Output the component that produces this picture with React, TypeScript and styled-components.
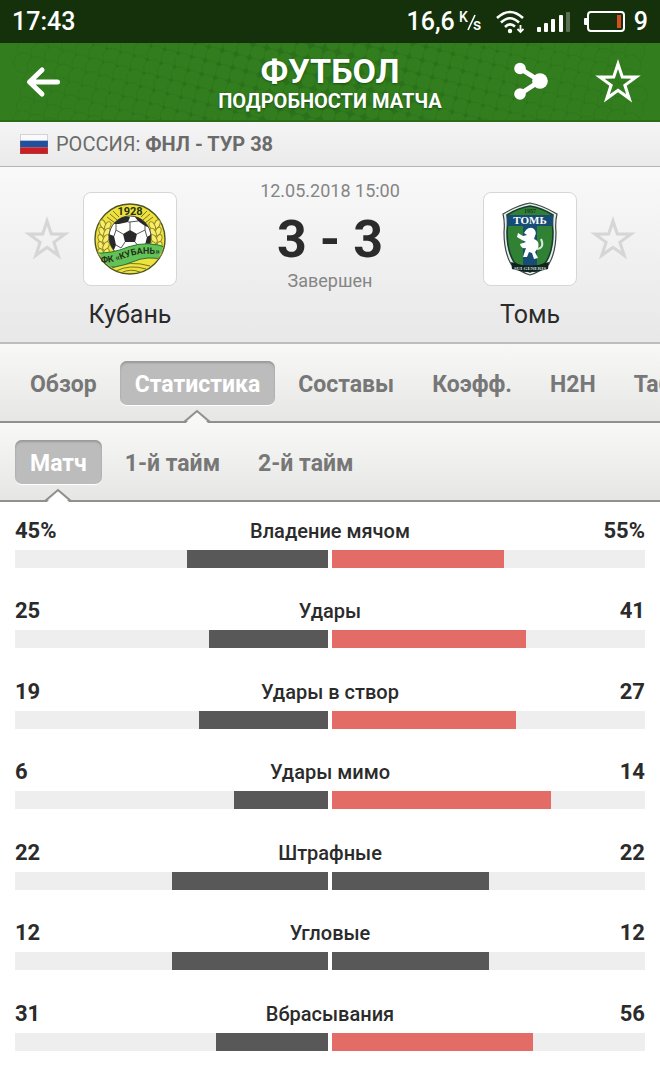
import React from 'react';
import styled, { createGlobalStyle } from 'styled-components';

const Global = createGlobalStyle`
  * { box-sizing: border-box; }
  html { overflow-x: hidden; }
  body {
    margin: 0;
    background: #fff;
    font-family: Roboto, "Liberation Sans", sans-serif;
    color: #2b2b2b;
  }
  button { font: inherit; border: 0; padding: 0; margin: 0; background: none; cursor: pointer; }
  h1, h2, p { margin: 0; font-weight: inherit; }
`;

const Screen = styled.div`
  min-height: 100vh;
  display: flex;
  flex-direction: column;
  overflow: hidden;
`;

const StatusBar = styled.div`
  height: 43px;
  padding: 0 12px;
  display: flex;
  align-items: center;
  justify-content: space-between;
  background: #14310b;
  color: #fff;
  font-size: 25px;
  line-height: 40px;
  font-weight: 500;
`;

const StatusGroup = styled.div<{ $gap: number }>`
  display: flex;
  align-items: center;
  gap: ${(p) => p.$gap}px;
`;

const Header = styled.header`
  position: relative;
  height: 79px;
  padding: 0 20px;
  display: grid;
  grid-template-columns: 126px 1fr 126px;
  align-items: center;
  background: #327d1e;
  color: #fff;
  border-bottom: 2px solid #2a6a19;
`;

const Halftone = styled.svg`
  position: absolute;
  inset: 0;
  width: 100%;
  height: 100%;
`;

const HeaderTitle = styled.div`
  position: relative;
  padding-top: 2px;
  text-align: center;
  white-space: nowrap;
  font-weight: 700;
  text-shadow: 0 1px 2px rgba(0, 40, 0, 0.5);
`;

const Title = styled.h1`
  font-size: 34px;
  line-height: 36px;
  font-weight: 700;
`;

const Subtitle = styled.p`
  font-size: 20px;
  line-height: 24px;
`;

const HeaderActions = styled.div<{ $end?: boolean }>`
  position: relative;
  display: flex;
  align-items: center;
  justify-content: ${(p) => (p.$end ? 'space-between' : 'flex-start')};
`;

const IconButton = styled.button`
  display: flex;
  color: inherit;
`;

const LeagueBar = styled.div`
  height: 45px;
  padding: 0 20px;
  display: flex;
  align-items: center;
  gap: 8px;
  background: linear-gradient(#f5f5f5, #eaeaea);
  border-bottom: 1px solid #b4b4b4;
  color: #6b6b6b;
  font-size: 20px;
  line-height: 42px;
`;

const Match = styled.section`
  height: 177px;
  padding: 0 25px;
  display: grid;
  grid-template-columns: 44px 122px 1fr 122px 44px;
  background: linear-gradient(#f9f9f9, #e8e8e8);
  border-bottom: 2px solid #bdbdbd;
`;

const Favourite = styled.button`
  height: 144px;
  display: flex;
  align-items: center;
  justify-content: center;
  color: #d6d6d6;
`;

const Team = styled.div`
  padding-top: 25px;
  display: flex;
  flex-direction: column;
  align-items: center;
  gap: 12px;
`;

const TeamName = styled.h2`
  font-size: 25px;
  line-height: 34px;
`;

const Crest = styled.div`
  width: 94px;
  height: 94px;
  display: flex;
  align-items: center;
  justify-content: center;
  background: #fff;
  border: 1px solid #d6d6d6;
  border-radius: 8px;
`;

const Result = styled.div`
  padding-top: 12px;
  text-align: center;
  color: #858585;
  font-size: 18px;
  line-height: 24px;
`;

const Score = styled.p`
  padding-top: 8px;
  color: #2b2b2b;
  font-size: 52px;
  line-height: 58px;
  font-weight: 700;
`;

const TabBar = styled.nav`
  height: 79px;
  padding: 0 15px;
  display: flex;
  align-items: center;
  gap: 8px;
  background: linear-gradient(#f8f8f7, #e6e6e5);
  border-bottom: 2px solid #90908e;
`;

const Tab = styled.button<{ $active?: boolean }>`
  position: relative;
  flex: none;
  height: 44px;
  padding: 4px 15px 0;
  border-radius: 7px;
  font-size: 23px;
  line-height: 40px;
  font-weight: 700;
  white-space: nowrap;
  color: ${(p) => (p.$active ? '#fff' : '#777')};
  background: ${(p) => (p.$active ? '#bcbcbc' : 'none')};
  box-shadow: ${(p) => (p.$active ? 'inset 0 2px 2px #999, 0 1px 0 #fff' : 'none')};
`;

const Pointer = styled.svg`
  position: absolute;
  left: 50%;
  top: 48px;
  margin-left: -14px;
  overflow: visible;
`;

const Stats = styled.ul`
  flex: 1;
  margin: 0;
  padding: 15px 15px 0;
  list-style: none;
  display: grid;
  grid-auto-rows: 1fr;
`;

const Stat = styled.li`
  min-height: 64px;
`;

const StatHead = styled.div`
  display: grid;
  grid-template-columns: 80px 1fr 80px;
  font-size: 20px;
  line-height: 28px;
  text-align: center;
  font-weight: 500;
  margin-bottom: 5px;
`;

const Value = styled.strong<{ $right?: boolean }>`
  text-align: ${(p) => (p.$right ? 'right' : 'left')};
  font-size: 22px;
  font-weight: 700;
`;

const Bars = styled.div`
  display: grid;
  grid-template-columns: 1fr 1fr;
  gap: 4px;
`;

const Track = styled.div<{ $from: 'start' | 'end' }>`
  height: 18px;
  display: flex;
  justify-content: flex-${(p) => p.$from};
  background: #eee;
`;

const Fill = styled.div<{ $lead?: boolean }>`
  background: ${(p) => (p.$lead ? '#e46c67' : '#585858')};
`;

const StarIcon = styled.svg`
  overflow: visible;
`;

function starPath(outer: number, inner: number) {
  const points = Array.from({ length: 10 }, (_, i) => {
    const r = i % 2 ? inner : outer;
    const a = (i * Math.PI) / 5;
    return `${(22 + r * Math.sin(a)).toFixed(1)} ${(23 - r * Math.cos(a)).toFixed(1)}`;
  });
  return `M${points.join('L')}Z`;
}

function Star() {
  return (
    <StarIcon width="44" height="44" viewBox="0 0 44 44" fill="currentColor" fillRule="evenodd">
      <path d={starPath(24, 9.2) + starPath(14, 5.4)} />
    </StarIcon>
  );
}

function Dots() {
  const dots: React.ReactElement[] = [];
  const a = 0.26;
  const step = 14;
  for (let i = -30; i < 54; i++) {
    for (let j = -20; j < 24; j++) {
      const x = (i * Math.cos(a) - j * Math.sin(a)) * step;
      const y = (i * Math.sin(a) + j * Math.cos(a)) * step;
      const d = Math.abs(x - 330);
      if (d > 310 || y < -12 || y > 92) continue;
      dots.push(<circle key={`${i}/${j}`} cx={x.toFixed(1)} cy={y.toFixed(1)} r={(7 + d / 105).toFixed(1)} />);
    }
  }
  return (
    <Halftone viewBox="0 0 660 79" preserveAspectRatio="xMidYMid slice" aria-hidden="true">
      <rect x="50" width="560" height="79" fill="#2b701b" />
      <g fill="#327d1e" stroke="#2e761c" strokeWidth="0.6">{dots}</g>
    </Halftone>
  );
}

function KubanCrest() {
  return (
    <svg width="72" height="74" viewBox="0 0 72 74" role="img" aria-label="Кубань">
      <defs>
        <clipPath id="ball"><circle cx="36" cy="35" r="21" /></clipPath>
        <clipPath id="disc"><circle cx="36" cy="37" r="34" /></clipPath>
        <path id="ribbonLine" d="M7 61 Q20 61 34 55 Q50 49 72 54" />
      </defs>
      <circle cx="36" cy="37" r="35" fill="#efe23c" stroke="#4c5526" strokeWidth="1.4" />
      <g fill="none" stroke="#76752a" strokeWidth="1">
        <path d="M13 15 L21 21 M16 12 L23 18 M19 9 L25 15 M59 15 L51 21 M56 12 L49 18 M53 9 L47 15" />
        <path d="M18 66 Q36 58 56 64 M22 69 Q36 62 52 67 M27 71 Q36 66 46 70" />
      </g>
      <g fill="#f8ec68" stroke="#8d8528" strokeWidth="0.9">
        {[0, 1, 2, 3, 4].map((n) => (
          <g key={n}>
            <ellipse cx={7 + (n < 2 ? 2 - n : 0)} cy={23 + n * 7} rx="2.6" ry="4.6" transform={`rotate(-22 7 ${23 + n * 7})`} />
            <ellipse cx={12 + (n < 2 ? 2 - n : 0)} cy={23 + n * 7} rx="2.6" ry="4.6" transform={`rotate(28 12 ${23 + n * 7})`} />
            <ellipse cx={65 - (n < 2 ? 2 - n : 0)} cy={23 + n * 7} rx="2.6" ry="4.6" transform={`rotate(22 65 ${23 + n * 7})`} />
            <ellipse cx={60 - (n < 2 ? 2 - n : 0)} cy={23 + n * 7} rx="2.6" ry="4.6" transform={`rotate(-28 60 ${23 + n * 7})`} />
          </g>
        ))}
      </g>
      <circle cx="36" cy="35" r="21" fill="#fff" stroke="#444" strokeWidth="1" />
      <g clipPath="url(#ball)">
        <path fill="#292929" d="M36 28 L43 32 L41 40 L31 40 L29 32 Z M24 13 L36 15 L34 20 L25 22 L20 22 Z M48 13 L57 26 L51 24 L44 19 L41 15 Z M14 32 L20 34 L22 43 L19 50 L13 45 Z M58 32 L53 35 L51 43 L55 49 L60 45 Z" />
        <path fill="none" stroke="#555" strokeWidth="1" d="M36 28 V20 L44 19 M34 20 L36 20 M43 32 L51 28 V24 M41 40 L46 46 L51 43 M31 40 L27 46 L22 43 M29 32 L22 28 V22 M22 28 L20 34 M51 28 L53 35" />
      </g>
      <g clipPath="url(#disc)">
        <path d="M-1 51 Q18 52 34 45 Q54 38 74 46 L70 58 Q54 53 38 60 Q22 67 4 65 Z" fill="#62c158" stroke="#2c7331" strokeWidth="1" />
      </g>
      <g fontFamily="Roboto, sans-serif" fontWeight="700" fill="#243218">
        <text x="36" y="13" textAnchor="middle" fontSize="11">1928</text>
        <text fontSize="9"><textPath href="#ribbonLine">ФК «КУБАНЬ»</textPath></text>
      </g>
    </svg>
  );
}

function TomCrest() {
  return (
    <svg width="56" height="74" viewBox="0 0 56 74" role="img" aria-label="Томь">
      <path d="M28 1 Q40 3 55 12 Q53 20 54 30 Q54 50 47 62 Q38 70 28 73 Q18 70 9 62 Q2 50 2 30 Q3 20 1 12 Q16 3 28 1 Z" fill="#e7eeeb" stroke="#39463f" strokeWidth="1.2" />
      <path d="M28 4 Q40 6 51 13 Q50 20 51 30 Q51 49 44 60 Q36 67 28 70 Q20 67 12 60 Q5 49 5 30 Q6 20 5 13 Q16 6 28 4 Z" fill="#318135" stroke="#173c2e" strokeWidth="1.6" />
      <path d="M5 13 H51 V24 H35 V70 H21 V24 H5 Z" fill="#174d75" />
      <path d="M24 28 Q28 24 32 27 Q35 30 33 34 L32 37 Q38 39 36 46 L33 50 L36 56 L32 57 L30 51 L27 50 L25 55 L21 55 L24 46 Q19 47 18 42 L24 40 L20 38 L15 35 L16 31 L21 34 L25 33 L22 31 Z" fill="#fff" />
      <path d="M35 47 Q43 46 39 37" stroke="#d9e9df" strokeWidth="2" fill="none" />
      <path d="M9 60 Q28 67 47 60 L46 67 Q28 73 10 67 Z" fill="#11231e" />
      <g textAnchor="middle" fontFamily="Liberation Serif, serif" fontWeight="700">
        <text x="28" y="11" fontSize="6" fill="#12351f">1957</text>
        <text x="28" y="22" fontSize="11" fill="#fff">ТОМЬ</text>
        <text x="28" y="68" fontSize="5" fill="#d5ddd8">SUI GENERIS</text>
      </g>
    </svg>
  );
}

function TabPointer({ fill }: { fill: string }) {
  return (
    <Pointer width="28" height="16" viewBox="0 0 28 16" aria-hidden="true">
      <path d="M1 16 L14 3 L27 16 Z" fill={fill} />
      <path d="M1 13 L14 2 L27 13" fill="none" stroke="#90908e" strokeWidth="2" />
    </Pointer>
  );
}

const TABS = ['Обзор', 'Статистика', 'Составы', 'Коэфф.', 'H2H', 'Таблица'];
const PERIODS = ['Матч', '1-й тайм', '2-й тайм'];
const STATS = [
  { name: 'Владение мячом', home: 45, away: 55, unit: '%' },
  { name: 'Удары', home: 25, away: 41 },
  { name: 'Удары в створ', home: 19, away: 27 },
  { name: 'Удары мимо', home: 6, away: 14 },
  { name: 'Штрафные', home: 22, away: 22 },
  { name: 'Угловые', home: 12, away: 12 },
  { name: 'Вбрасывания', home: 31, away: 56 },
];

export default function App() {
  return (
    <Screen>
      <Global />
      <StatusBar>
        <span>17:43</span>
        <StatusGroup $gap={13}>
          <StatusGroup $gap={4}>
            16,6
            <svg width="24" height="24" viewBox="0 0 24 24" fill="#fff" fontFamily="Roboto, sans-serif">
              <text x="0" y="12" fontSize="14">K</text>
              <path d="M16 5 L9 20" stroke="#fff" strokeWidth="1.6" />
              <text x="14" y="20" fontSize="16">s</text>
            </svg>
          </StatusGroup>
          <svg width="28" height="24" viewBox="0 0 28 24" fill="none" stroke="#fff" strokeWidth="2.6">
            <path d="M1 8 Q14 -4 27 8 M5 12.500 Q14 4 23 12.500 M9 17 Q14 12 19 16.500" />
            <circle cx="14" cy="21" r="2.200" fill="#fff" stroke="none" />
            <path d="M24.500 15 V22 M21.500 19 L24.500 22 L27.500 19" strokeWidth="1.800" />
          </svg>
          <svg width="34" height="22" viewBox="0 0 34 22" fill="#fff">
            <rect x="0" y="16" width="4" height="5" rx="1" />
            <rect x="7" y="12" width="4" height="9" rx="1" />
            <rect x="14" y="8" width="4" height="13" rx="1" />
            <rect x="22" y="4" width="4" height="17" rx="1" />
            <rect x="29" y="1" width="4" height="20" rx="1" opacity="0.3" />
          </svg>
          <StatusGroup $gap={8}>
            <svg width="42" height="22" viewBox="0 0 42 22">
              <rect x="4" y="1" width="36" height="19" rx="3" fill="none" stroke="#fff" strokeWidth="2" />
              <rect x="0" y="7" width="4" height="7" rx="1" fill="#fff" />
              <rect x="33" y="4" width="4" height="13" fill="#d5501e" />
            </svg>
            <span>9</span>
          </StatusGroup>
        </StatusGroup>
      </StatusBar>

      <Header>
        <Dots />
        <HeaderActions>
          <IconButton aria-label="Назад">
            <svg width="48" height="32" viewBox="0 0 48 32" fill="none" stroke="#fff" strokeWidth="5" strokeLinecap="round" strokeLinejoin="round">
              <path d="M37.500 16 H11 M22 4 L9.500 16 L22 28" />
            </svg>
          </IconButton>
        </HeaderActions>
        <HeaderTitle>
          <Title>ФУТБОЛ</Title>
          <Subtitle>ПОДРОБНОСТИ МАТЧА</Subtitle>
        </HeaderTitle>
        <HeaderActions $end>
          <IconButton aria-label="Поделиться">
            <svg width="36" height="44" viewBox="0 0 36 44" fill="#fff">
              <path d="M6 8.500 L26 21 L6 34" fill="none" stroke="#fff" strokeWidth="4.600" />
              <circle cx="6" cy="8.500" r="5.800" /><circle cx="26" cy="21" r="7.800" /><circle cx="6" cy="34" r="5.800" />
            </svg>
          </IconButton>
          <IconButton aria-label="В избранное"><Star /></IconButton>
        </HeaderActions>
      </Header>

      <LeagueBar>
        <svg width="28" height="20" viewBox="0 0 28 21" preserveAspectRatio="none" role="img" aria-label="Россия">
          <rect width="28" height="7" fill="#fafafa" />
          <rect y="7" width="28" height="7" fill="#20509f" />
          <rect y="14" width="28" height="7" fill="#ca1f22" />
          <rect x="0.500" y="0.500" width="27" height="20" fill="none" stroke="#777" strokeOpacity="0.3" />
        </svg>
        <span>РОССИЯ: <b>ФНЛ - ТУР 38</b></span>
      </LeagueBar>

      <Match>
        <Favourite aria-label="Кубань в избранное"><Star /></Favourite>
        <Team><Crest><KubanCrest /></Crest><TeamName>Кубань</TeamName></Team>
        <Result>
          <p>12.05.2018 15:00</p>
          <Score>3 - 3</Score>
          <p>Завершен</p>
        </Result>
        <Team><Crest><TomCrest /></Crest><TeamName>Томь</TeamName></Team>
        <Favourite aria-label="Томь в избранное"><Star /></Favourite>
      </Match>

      <TabBar>
        {TABS.map((t) => (
          <Tab key={t} $active={t === 'Статистика'}>
            {t}
            {t === 'Статистика' && <TabPointer fill="#f8f8f7" />}
          </Tab>
        ))}
      </TabBar>
      <TabBar>
        {PERIODS.map((t) => (
          <Tab key={t} $active={t === 'Матч'}>
            {t}
            {t === 'Матч' && <TabPointer fill="#fff" />}
          </Tab>
        ))}
      </TabBar>

      <Stats>
        {STATS.map((s) => {
          const total = s.home + s.away;
          return (
            <Stat key={s.name}>
              <StatHead>
                <Value>{s.home}{s.unit}</Value>
                <span>{s.name}</span>
                <Value $right>{s.away}{s.unit}</Value>
              </StatHead>
              <Bars>
                <Track $from="end"><Fill $lead={s.home > s.away} style={{ width: `${(s.home / total) * 100}%` }} /></Track>
                <Track $from="start"><Fill $lead={s.away > s.home} style={{ width: `${(s.away / total) * 100}%` }} /></Track>
              </Bars>
            </Stat>
          );
        })}
      </Stats>
    </Screen>
  );
}
